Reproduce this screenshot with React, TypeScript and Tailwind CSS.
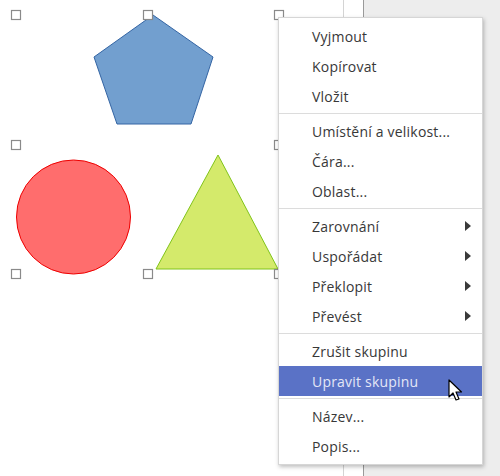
import React from 'react';

type Item = { label: string; submenu?: boolean; active?: boolean };

const groups: Item[][] = [
  [{ label: 'Vyjmout' }, { label: 'Kopírovat' }, { label: 'Vložit' }],
  [{ label: 'Umístění a velikost...' }, { label: 'Čára...' }, { label: 'Oblast...' }],
  [
    { label: 'Zarovnání', submenu: true },
    { label: 'Uspořádat', submenu: true },
    { label: 'Překlopit', submenu: true },
    { label: 'Převést', submenu: true },
  ],
  [{ label: 'Zrušit skupinu' }, { label: 'Upravit skupinu', active: true }],
  [{ label: 'Název...' }, { label: 'Popis...' }],
];

// selection handles around the group
const handles = [
  [16, 15], [148, 15], [279, 15],
  [16, 145], [279, 145],
  [16, 274], [148, 274], [279, 274],
];

const Shapes = () => (
  <svg width="343" height="476" className="block">
    <polygon
      points="153,15 213,57 191,124 117,124 94,57"
      fill="#729fcf"
      stroke="#3465a4"
      strokeWidth="1"
    />
    <circle cx="73.5" cy="217" r="57" fill="#ff6d6d" stroke="#ee0000" strokeWidth="1" />
    <polygon points="218,155 278,269 156,269" fill="#d4ea6b" stroke="#81c41a" strokeWidth="1" />
    {handles.map(([x, y], i) => (
      <rect
        key={i}
        x={x - 4.5}
        y={y - 4.5}
        width="9"
        height="9"
        fill="white"
        stroke="#8a8a8a"
        strokeWidth="1.2"
      />
    ))}
  </svg>
);

const ContextMenu = () => (
  <div
    className="absolute left-[278px] top-[17px] w-[205px] bg-white border border-[#d6d6d6] shadow-[1px_2px_4px_rgba(0,0,0,0.25)] py-[3px] text-[14px] tracking-[0.2px] text-[#383838]"
    style={{ fontFamily: '"Open Sans", "DejaVu Sans", sans-serif' }}
  >
    {groups.map((group, gi) => (
      <div key={gi}>
        {gi > 0 && (
          <div className="h-[5px] flex items-center">
            <div className="h-px w-full bg-[#dcdcdc]" />
          </div>
        )}
        {group.map((item) => (
          <div
            key={item.label}
            className={
              item.active
                ? 'h-[30px] flex items-center pl-[33px] pr-[11px] bg-[#5a72c6] text-[#e4e7f6]'
                : 'h-[30px] flex items-center pl-[33px] pr-[11px]'
            }
          >
            <span className="flex-1 pt-px">{item.label}</span>
            {item.submenu && (
              <svg width="6" height="10" viewBox="0 0 6 10">
                <path d="M0 0 L6 5 L0 10 Z" fill="#3a3a3a" />
              </svg>
            )}
          </div>
        ))}
      </div>
    ))}
  </div>
);

const Cursor = () => (
  <svg
    className="absolute left-[448px] top-[379px]"
    width="16"
    height="24"
    viewBox="0 0 16 24"
  >
    <path
      d="M1 1 L1 18 L5 14 L8 21 L11 20 L8 13 L13.5 13 Z"
      fill="white"
      stroke="black"
      strokeWidth="1.2"
      strokeLinejoin="round"
    />
  </svg>
);

export default function App() {
  return (
    <div className="relative w-[500px] h-[476px] overflow-hidden flex bg-[#ededed]">
      <div className="w-[343px] h-full bg-white">
        <Shapes />
      </div>
      <div className="w-px h-full bg-[#d4d4d4]" />
      <div className="w-[19px] h-full bg-white" />
      <div className="w-px h-full bg-[#9a9a9a]" />
      <div className="flex-1 h-full bg-[#ededed]" />
      <ContextMenu />
      <Cursor />
    </div>
  );
}
